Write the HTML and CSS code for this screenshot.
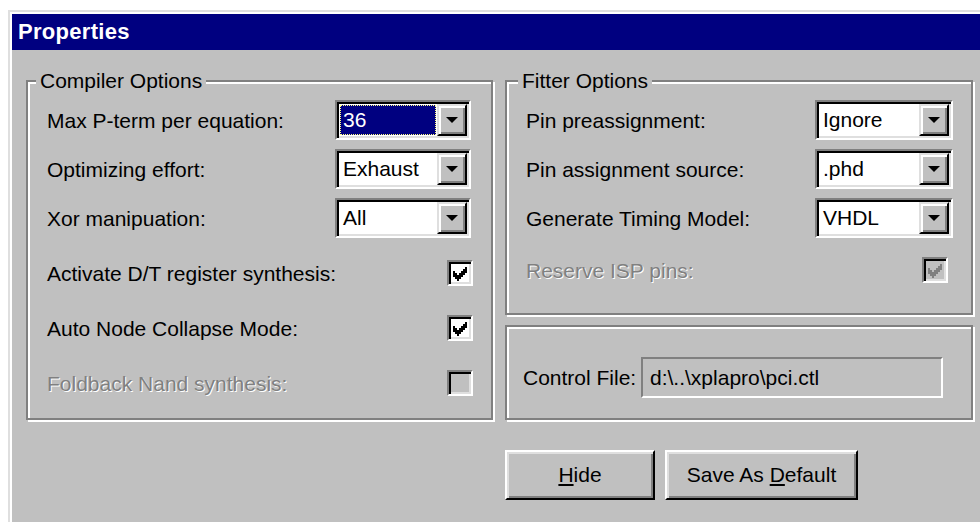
FILE: index.html
```html
<!DOCTYPE html>
<html>
<head>
<meta charset="utf-8">
<title>Properties</title>
<link rel="stylesheet" href="styles.css">
</head>
<body>
<div class="window">
  <div class="titlebar">Properties</div>
  <div class="client">
    <div class="group compiler">
      <span class="legend">Compiler Options</span>
      <div class="row">
        <span class="label">Max P-term per equation:</span>
        <div class="combo"><div class="field sel"><span class="hilite">36</span></div><div class="drop"><i class="arrow"></i></div></div>
      </div>
      <div class="row">
        <span class="label">Optimizing effort:</span>
        <div class="combo"><div class="field">Exhaust</div><div class="drop"><i class="arrow"></i></div></div>
      </div>
      <div class="row">
        <span class="label">Xor manipuation:</span>
        <div class="combo"><div class="field">All</div><div class="drop"><i class="arrow"></i></div></div>
      </div>
      <div class="row check-row">
        <span class="label">Activate D/T register synthesis:</span>
        <span class="checkbox"><svg class="tick" viewBox="0 0 7 7" width="14" height="14" shape-rendering="crispEdges"><path d="M6 0h1v1h-1zM5 1h2v1h-2zM0 2h1v1h-1zM4 2h3v1h-3zM0 3h2v1h-2zM3 3h3v1h-3zM0 4h5v1h-5zM1 5h3v1h-3zM2 6h1v1h-1z"/></svg></span>
      </div>
      <div class="row check-row">
        <span class="label">Auto Node Collapse Mode:</span>
        <span class="checkbox"><svg class="tick" viewBox="0 0 7 7" width="14" height="14" shape-rendering="crispEdges"><path d="M6 0h1v1h-1zM5 1h2v1h-2zM0 2h1v1h-1zM4 2h3v1h-3zM0 3h2v1h-2zM3 3h3v1h-3zM0 4h5v1h-5zM1 5h3v1h-3zM2 6h1v1h-1z"/></svg></span>
      </div>
      <div class="row check-row">
        <span class="label disabled">Foldback Nand synthesis:</span>
        <span class="checkbox off"></span>
      </div>
    </div>

    <div class="side">
      <div class="group fitter">
        <span class="legend">Fitter Options</span>
        <div class="row">
          <span class="label">Pin preassignment:</span>
          <div class="combo wide"><div class="field">Ignore</div><div class="drop"><i class="arrow"></i></div></div>
        </div>
        <div class="row">
          <span class="label">Pin assignment source:</span>
          <div class="combo wide"><div class="field">.phd</div><div class="drop"><i class="arrow"></i></div></div>
        </div>
        <div class="row">
          <span class="label">Generate Timing Model:</span>
          <div class="combo wide"><div class="field">VHDL</div><div class="drop"><i class="arrow"></i></div></div>
        </div>
        <div class="row isp-row">
          <span class="label disabled">Reserve ISP pins:</span>
          <span class="checkbox off isp"><svg class="tick" viewBox="0 0 7 7" width="14" height="14" shape-rendering="crispEdges"><path d="M6 0h1v1h-1zM5 1h2v1h-2zM0 2h1v1h-1zM4 2h3v1h-3zM0 3h2v1h-2zM3 3h3v1h-3zM0 4h5v1h-5zM1 5h3v1h-3zM2 6h1v1h-1z"/></svg></span>
        </div>
      </div>
      <div class="group control">
        <span class="label">Control File:</span>
        <div class="ctl-field">d:\..\xplapro\pci.ctl</div>
      </div>
    </div>

    <div class="buttons">
      <div class="btn hide"><span><u>H</u>ide</span></div>
      <div class="btn save"><span>Save As <u>D</u>efault</span></div>
    </div>
  </div>
</div>
</body>
</html>
```
FILE: styles.css
```css
html, body {
  margin: 0;
}

body {
  background: #fff;
  width: 980px;
  height: 522px;
  overflow: hidden;
  font-family: "Liberation Sans", Arial, sans-serif;
  font-size: 21px;
  color: #000;
}

/* dialog frame */
.window {
  margin: 10px 0 0 8px;
  width: 990px;
  height: 520px;
  background: #c0c0c0;
  border-top: 2px solid #dfdfdf;
  border-left: 2px solid #dfdfdf;
  padding: 2px 0 0 2px;
  box-shadow: inset 2px 2px 0 #fff;
}

.titlebar {
  height: 36px;
  line-height: 36px;
  background: #000080;
  color: #fff;
  font-weight: bold;
  font-size: 22px;
  letter-spacing: 0.3px;
  padding-left: 6px;
}

.client {
  display: grid;
  grid-template-columns: 467px 468px;
  column-gap: 12px;
  align-items: start;
  padding: 30px 0 0 14px;
}

/* etched group box */
.group {
  position: relative;
  box-sizing: border-box;
  border: 2px solid #808080;
  box-shadow: inset 2px 2px 0 #fff, 2px 2px 0 #fff;
}

.legend {
  position: absolute;
  top: -13px;
  left: 8px;
  padding: 0 4px 0 4px;
  line-height: 24px;
  background: #c0c0c0;
}

.compiler {
  height: 340px;
  padding: 18px 20px 0 19px;
}

.side {
  display: flex;
  flex-direction: column;
  gap: 10px;
}

.fitter {
  height: 235px;
  padding: 18px 18px 0 19px;
}

.fitter .legend {
  left: 11px;
}

.row {
  display: flex;
  align-items: center;
  justify-content: space-between;
  height: 40px;
}

.row + .row {
  margin-top: 9px;
}

.row.check-row {
  margin-top: 15px;
}

.row.isp-row {
  margin-top: 12px;
}

.label {
  line-height: 24px;
  padding-top: 2px;
  white-space: nowrap;
}

.disabled {
  color: #808080;
  text-shadow: 1px 1px 0 #fff;
}

/* sunken drop-down list */
.combo {
  box-sizing: border-box;
  width: 136px;
  height: 40px;
  display: flex;
  padding: 2px;
  background: #fff;
  border: 2px solid;
  border-color: #808080 #fff #fff #808080;
  box-shadow: inset 2px 2px 0 #000, inset -2px -2px 0 #dfdfdf;
}

.combo.wide {
  width: 138px;
}

.field {
  flex: 1;
  display: flex;
  align-items: center;
  padding-left: 4px;
  white-space: nowrap;
}

.field.sel {
  padding: 1px;
  align-items: stretch;
}

.hilite {
  flex: 1;
  display: flex;
  align-items: center;
  padding-left: 2px;
  background: #000080;
  color: #fff;
  border: 1px dotted #ffff80;
}

.drop {
  box-sizing: border-box;
  width: 30px;
  display: flex;
  align-items: center;
  justify-content: center;
  background: #c0c0c0;
  border: 2px solid;
  border-color: #dfdfdf #000 #000 #dfdfdf;
  box-shadow: inset 2px 2px 0 #fff, inset -2px -2px 0 #808080;
}

.arrow {
  width: 0;
  height: 0;
  border-left: 6px solid transparent;
  border-right: 6px solid transparent;
  border-top: 6px solid #000;
}

/* check boxes */
.checkbox {
  box-sizing: border-box;
  width: 26px;
  height: 26px;
  margin-right: -2px;
  display: flex;
  align-items: center;
  justify-content: center;
  padding-top: 2px;
  background: #fff;
  border: 2px solid;
  border-color: #808080 #fff #fff #808080;
  box-shadow: inset 2px 2px 0 #000, inset -2px -2px 0 #dfdfdf;
}

.tick {
  display: block;
  fill: #000;
}

.checkbox.off {
  background: #c0c0c0;
}

.checkbox.off .tick {
  fill: #808080;
}

.checkbox.isp {
  margin-right: 5px;
}

/* control file box */
.control {
  height: 95px;
  display: flex;
  align-items: flex-start;
  padding: 30px 28px 0 16px;
}

.control .label {
  margin-top: 7px;
}

.ctl-field {
  box-sizing: border-box;
  width: 302px;
  height: 41px;
  margin-left: auto;
  display: flex;
  align-items: center;
  padding-left: 7px;
  border: 2px solid;
  border-color: #808080 #fff #fff #808080;
  white-space: nowrap;
}

/* push buttons */
.buttons {
  grid-column: 2;
  display: flex;
  gap: 10px;
  margin-top: 30px;
}

.btn {
  box-sizing: border-box;
  height: 50px;
  display: flex;
  align-items: center;
  justify-content: center;
  border: 2px solid;
  border-color: #fff #000 #000 #fff;
  box-shadow: inset 2px 2px 0 #dfdfdf, inset -2px -2px 0 #808080;
}

.btn.hide {
  width: 150px;
}

.btn.save {
  width: 193px;
}

.btn u {
  text-underline-offset: 2px;
}
```
